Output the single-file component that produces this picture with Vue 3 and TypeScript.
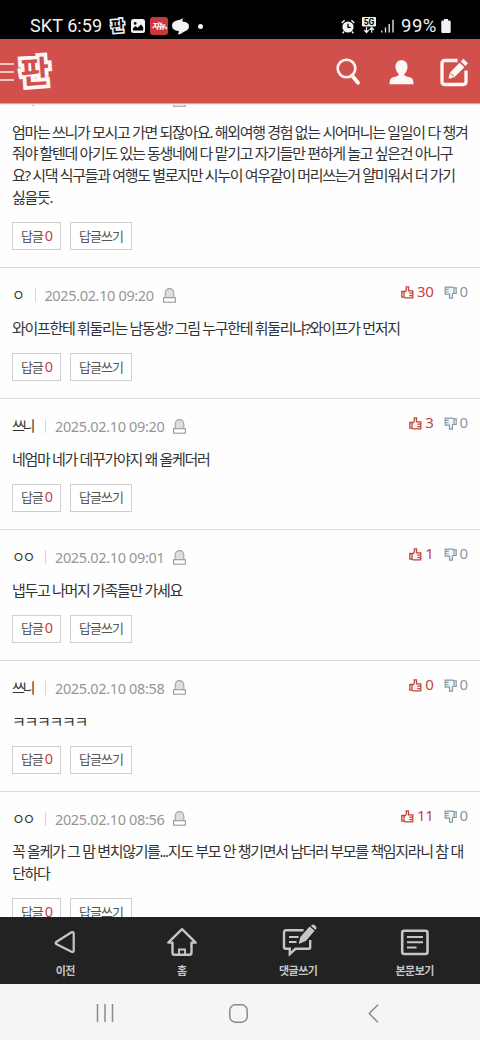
<script setup lang="ts">
interface Comment { name: string; date: string; up: number; lines: string[] }

const comments: Comment[] = [
  {
    name: '쓰니', date: '2025.02.10 09:21', up: 0,
    lines: [
      '엄마는 쓰니가 모시고 가면 되잖아요. 해외여행 경험 없는 시어머니는 일일이 다 챙겨',
      '줘야 할텐데 아기도 있는 동생네에 다 맡기고 자기들만 편하게 놀고 싶은건 아니구',
      '요? 시댁 식구들과 여행도 별로지만 시누이 여우같이 머리쓰는거 얄미워서 더 가기',
      '싫을듯.',
    ],
  },
  { name: 'ㅇ', date: '2025.02.10 09:20', up: 30, lines: ['와이프한테 휘둘리는 남동생? 그림 누구한테 휘둘리냐?와이프가 먼저지'] },
  { name: '쓰니', date: '2025.02.10 09:20', up: 3, lines: ['네엄마 네가 데꾸가야지 왜 올케더러'] },
  { name: 'ㅇㅇ', date: '2025.02.10 09:01', up: 1, lines: ['냅두고 나머지 가족들만 가세요'] },
  { name: '쓰니', date: '2025.02.10 08:58', up: 0, lines: ['ㅋㅋㅋㅋㅋㅋ'] },
  {
    name: 'ㅇㅇ', date: '2025.02.10 08:56', up: 11,
    lines: ['꼭 올케가 그 맘 변치않기를...지도 부모 안 챙기면서 남더러 부모를 책임지라니 참 대', '단하다'],
  },
]
</script>

<template>
  <div class="screen">
    <div class="status">
      <div class="st-left">
        <span class="st-text carrier">SKT 6:59</span>
        <svg class="st-pan" width="17" height="18" viewBox="0 0 36 38">
          <text x="18" y="30" text-anchor="middle" class="pan-glyph dark" transform="rotate(-4 18 18)">판</text>
        </svg>
        <svg class="st-img" width="14" height="14" viewBox="0 0 14 14">
          <rect width="14" height="14" rx="2.5" fill="#f2f2f2" />
          <circle cx="4.2" cy="4.4" r="1.3" fill="#000" />
          <path d="M2 11.5V9.2L4.5 7l2 1.8L10 5.6l2.2 2.6v3.3z" fill="#000" />
        </svg>
        <span class="st-app">지뉴.</span>
        <svg class="st-swirl" width="17" height="17" viewBox="0 0 17 17">
          <path d="M11.500 0Q10 2 10.500 3.400 17 4 17 8.500 17 12 12 13.800 8.500 16.500 6 16.500L7 13.200Q0 12.500 0 7.500 0 3.500 5 2.500 9 1.800 11.500 0z" fill="#f2f2f2" />
        </svg>
        <span class="st-dot"></span>
      </div>
      <div class="st-right">
        <svg width="14" height="15" viewBox="0 0 14 15">
          <circle cx="7" cy="8" r="5.600" fill="#f2f2f2" />
          <path d="M.8 4 3.600 1.300M13.200 4 10.400 1.300M3 12.500 1.600 14.200M11 12.500l1.400 1.700" stroke="#f2f2f2" stroke-width="1.500" fill="none" />
          <path d="M7 4.800v3.500h2.800" stroke="#000" stroke-width="1.300" fill="none" />
        </svg>
        <svg class="st-5g" width="14" height="17" viewBox="0 0 14 17">
          <rect width="14" height="9.500" rx="1" fill="#f2f2f2" />
          <text x="7" y="8" text-anchor="middle" class="g5">5G</text>
          <path d="M4.500 10v5M2.300 13l2.200 2.500L6.700 13M9.700 15.800v-5M7.500 13l2.200-2.500 2.200 2.500" stroke="#f2f2f2" stroke-width="1.200" fill="none" />
        </svg>
        <svg class="st-sig" width="13" height="14" viewBox="0 0 13 14">
          <path d="M.8 11.500V13.500M4.500 8.500v5M8.200 5v8.500M12 .8v12.700" stroke="#f2f2f2" stroke-width="1.300" />
        </svg>
        <span class="st-text pct">99%</span>
        <svg class="st-bat" width="10" height="14" viewBox="0 0 10 14">
          <path d="M3 0h4v1.500h1.500q1.200 0 1.200 1.200v10q0 1.200-1.200 1.200h-7Q.3 13.900.3 12.700v-10Q.3 1.500 1.500 1.500H3z" fill="#f2f2f2" />
        </svg>
      </div>
    </div>

    <header class="header">
      <div class="burger"><i></i><i></i><i></i></div>
      <svg class="logo" width="36" height="36" viewBox="0 0 36 36">
        <text x="18" y="29" text-anchor="middle" class="pan-glyph" transform="rotate(-4 18 18)">판</text>
      </svg>
      <div class="tools">
        <svg width="25" height="28" viewBox="0 0 25 28">
          <circle cx="10.500" cy="10.500" r="8.800" fill="none" stroke="#fff7f5" stroke-width="2.600" />
          <path d="M16 17.500l6 7.300" stroke="#fff7f5" stroke-width="3.800" stroke-linecap="round" />
        </svg>
        <svg width="25" height="25" viewBox="0 0 25 25">
          <path d="M12.500.3c3.700 0 6 2.500 6 6.500 0 3-1.300 5.600-3 7v1.400c1 1 3.500 1.300 6 2.300 2.200.9 3 2.700 3 6.700H.5c0-4 .8-5.800 3-6.700 2.500-1 5-1.300 6-2.300v-1.400c-1.700-1.400-3-4-3-7 0-4 2.300-6.500 6-6.500z" fill="#fff7f5" />
        </svg>
        <svg width="29" height="29" viewBox="0 0 29 29">
          <path d="M17.500 2.500H5Q2 2.500 2 5.500v18q0 3 3 3h18q3 0 3-3V12.500" fill="none" stroke="#fff7f5" stroke-width="3.300" />
          <path d="M23.300.8l4.700 4.500-2.500 2.700-4.800-4.500zM19.600 4.700l4.800 4.500L14.600 18.900l-5 1.900-1-.9 1.400-5.400z" fill="#fff7f5" />
          <path d="M10.300 15l3.600 3.400" stroke="#d2504c" stroke-width="1" />
        </svg>
      </div>
    </header>

    <main class="list">
      <div class="scroll">
        <article v-for="(c, i) in comments" :key="i" class="comment">
          <div class="meta">
            <span class="name">{{ c.name }}</span>
            <span class="date">{{ c.date }}</span>
            <svg class="bell" width="13" height="15" viewBox="0 0 13 15">
              <path d="M2.200 9.500V5a4.300 4.400 0 0 1 8.600 0v4.500z" fill="#dedede" stroke="#a2a2a2" stroke-width="1.100" />
              <rect x=".6" y="9.700" width="11.800" height="4.500" fill="#fff" stroke="#a2a2a2" stroke-width="1.200" />
            </svg>
            <div class="votes">
              <svg class="thumb" width="13" height="13" viewBox="0 0 13 13">
                <path d="M3 5.500H.8v5.700H3M3 5.500h1.300L5.300 4V.8h2.200v4h4.300v7.100H4.200L3 11.200z" fill="#fff6f5" stroke="#c0453f" stroke-width="1.300" />
                <path d="M8.300 7.200h3.500M8.300 9.600h3.500" stroke="#c0453f" stroke-width="1.200" />
              </svg>
              <span class="up">{{ c.up }}</span>
              <svg class="thumb down-icon" width="13" height="13" viewBox="0 0 13 13">
                <path d="M10 7.500h2.200V1.800H10M10 7.500H8.700L8.400 9v3.200H5.500v-4H1.200V1.100h7.600L10 1.800z" fill="#f1f7fb" stroke="#8599a5" stroke-width="1.200" />
                <path d="M1.200 3.400h3.500M1.200 5.800h3.500" stroke="#8599a5" stroke-width="1.100" />
              </svg>
              <span class="down">0</span>
            </div>
          </div>
          <p class="body"><span v-for="l in c.lines" :key="l" class="line">{{ l }}</span></p>
          <div class="actions">
            <button class="btn reply">답글<b>0</b></button>
            <button class="btn write">답글쓰기</button>
          </div>
        </article>
      </div>
    </main>

    <nav class="bottom">
      <a class="tab t1">
        <svg width="32" height="34" viewBox="0 0 32 34">
          <path d="M7.200 16 22.500 6.300q2.200-1 2.200 1.200v17q0 2.200-2.200 1.200L7.200 18q-1.200-1 0-2z" fill="none" stroke="#c6c6c6" stroke-width="2.200" stroke-linejoin="round" />
        </svg>
        <span>이전</span>
      </a>
      <a class="tab t2">
        <svg width="32" height="34" viewBox="0 0 32 34">
          <path d="M2.300 16.600 16 3.200l13.700 13.400h-4.200v10.200q0 2-2 2h-15q-2 0-2-2V16.600z" fill="none" stroke="#c6c6c6" stroke-width="2.400" stroke-linejoin="round" />
          <path d="M13 28.500v-5h6v5" fill="none" stroke="#c6c6c6" stroke-width="1.900" />
        </svg>
        <span>홈</span>
      </a>
      <a class="tab t3">
        <svg width="36" height="34" viewBox="0 0 36 34">
          <path d="M23.500 4.300H6Q4 4.300 4 6.300v14.500q0 2 2 2h3.800v5.300l5.700-5.300h13.200q1.500 0 1.500-1.500V14" fill="none" stroke="#c6c6c6" stroke-width="2.400" />
          <path d="M9 11h9.500M9 16h7.500" stroke="#c6c6c6" stroke-width="2" />
          <path d="M31.500-.6q1.600-1.600 3.400-.2t1.600 3.300l-1 1.200-5-4zM29.600.6l5 4.100-8.700 10.300-7.200 3 1.600-7z" fill="#c6c6c6" />
        </svg>
        <span>댓글쓰기</span>
      </a>
      <a class="tab t4">
        <svg width="32" height="34" viewBox="0 0 32 34">
          <rect x="3.200" y="4.700" width="25.300" height="23.300" rx="2" fill="none" stroke="#c6c6c6" stroke-width="2.600" />
          <path d="M8 11h16M8 16.200h16M8 21.500h9.500" stroke="#c6c6c6" stroke-width="2.100" />
        </svg>
        <span>본문보기</span>
      </a>
    </nav>

    <div class="sysnav">
      <svg width="18" height="18" viewBox="0 0 18 18"><path d="M1.500 0v18M9 0v18M16.500 0v18" stroke="#8a8a8c" stroke-width="1.500" /></svg>
      <svg class="home-key" width="19" height="19" viewBox="0 0 19 19"><rect x=".8" y=".8" width="17.400" height="17.400" rx="5.500" fill="none" stroke="#8a8a8c" stroke-width="1.500" /></svg>
      <svg width="11" height="19" viewBox="0 0 11 19"><path d="M10 .7 1.200 9.500 10 18.300" fill="none" stroke="#8a8a8c" stroke-width="1.500" /></svg>
    </div>
  </div>
</template>

<style>
body { margin: 0; background: #fff; }
</style>

<style scoped>
.screen {
  width: 480px; height: 1040px; display: flex; flex-direction: column; overflow: hidden;
  background: #fefefe; font-family: "Noto Sans", "Noto Sans CJK KR", sans-serif; color: #333;
}
svg { display: block; flex: none; overflow: visible; }

.status {
  height: 39px; flex: none; background: #000; display: flex; justify-content: space-between;
  padding: 13px 29px 0 30px; box-sizing: border-box; color: #f2f2f2;
}
.st-left, .st-right { display: flex; align-items: center; height: 26px; }
.st-text { font: 400 18px/26px Roboto, sans-serif; white-space: nowrap; }
.carrier { width: 73px; letter-spacing: 0.080px; }
.st-pan { margin-left: 6px; }
.st-img { margin-left: 5px; }
.st-app {
  width: 18px; height: 18px; margin-left: 5px; border-radius: 3px; background: #c8383d; color: #fff;
  font: italic 900 8px/18px "Noto Sans CJK KR", sans-serif; letter-spacing: -0.800px; text-align: center;
}
.st-swirl { margin-left: 4px; }
.st-dot { width: 5px; height: 5px; border-radius: 50%; background: #f2f2f2; margin-left: 9px; }
.st-5g { margin-left: 7px; margin-top: -2px; }
.g5 { font: 700 8.500px Roboto, sans-serif; fill: #000; }
.st-sig { margin-left: 5px; }
.pct { margin-left: 7px; width: 37px; font-size: 18.500px; letter-spacing: 0.500px; }
.st-bat { margin-left: 3px; }

.header {
  height: 65px; flex: none; background: #d2504c; display: flex; align-items: center;
  box-sizing: border-box; border-bottom: 1px solid #e4a09d; box-shadow: 0 1px 1px #fbe9e9; z-index: 1;
}
.burger { width: 14px; display: flex; flex-direction: column; gap: 6px; padding-top: 2px; }
.burger i { height: 2px; background: #f3c6c2; }
.logo { margin-left: 3px; margin-top: 2px; }
.pan-glyph {
  font: 700 31px/31px "Noto Sans CJK KR", sans-serif; fill: #d2504c; stroke: #fff7f5; stroke-width: 7.500px;
  paint-order: stroke; stroke-linejoin: miter; stroke-miterlimit: 2;
}
.pan-glyph.dark { fill: #000; stroke: #f2f2f2; stroke-width: 7px; }
.tools { margin-left: auto; display: flex; align-items: center; gap: 28px; padding: 2px 11px 0 0; }
.tools svg:nth-child(3) { margin-left: -2px; }

.list { flex: 1; min-height: 0; overflow: hidden; }
.scroll { margin-top: -33px; }
.comment { border-top: 1px solid #dedede; padding: 16px 12px 17.100px; }
.meta { height: 22px; display: flex; align-items: center; }
.name { font-size: 14px; line-height: 22px; letter-spacing: -2.300px; color: #333; }
.date {
  font-size: 14.500px; line-height: 14px; color: #969696; letter-spacing: -0.350px;
  border-left: 1px solid #d6d6d6; margin-left: 12.300px; padding-left: 8.500px; white-space: nowrap;
}
.bell { margin-left: 9px; }
.votes { margin-left: auto; display: flex; align-items: center; margin-top: -8px; line-height: 20px; font-size: 15px; }
.thumb { margin-top: 3px; }
.up { color: #c0453f; margin-left: 3px; letter-spacing: -0.400px; }
.down { color: #8599a5; margin-left: 2px; }
.down-icon { margin-left: 11px; }
.body { margin: 11.700px 0 13.300px; font-size: 15px; line-height: 21.800px; letter-spacing: -1.320px; color: #333; }
.line { display: block; white-space: nowrap; }
.actions { display: flex; gap: 9px; height: 28px; }
.btn {
  box-sizing: border-box; height: 28px; border: 1px solid #cfcfcf; background: #fff; padding: 0;
  font: 400 13px/25px "Noto Sans", "Noto Sans CJK KR", sans-serif; letter-spacing: -1px; color: #555; white-space: nowrap;
}
.reply { width: 49px; }
.write { width: 62px; }
.btn b { font-weight: 400; font-size: 14.500px; line-height: 20px; color: #c0453f; margin-left: 2px; }

.bottom { height: 67px; flex: none; background: #222; display: flex; color: #c6c6c6; }
.tab { width: 116.500px; display: flex; flex-direction: column; align-items: center; }
.t1 { margin-left: 7px; }
.tab svg { margin-top: 9px; }
.tab span { font-size: 11px; font-weight: 700; line-height: 16px; margin-top: 3px; letter-spacing: -0.500px; white-space: nowrap; }

.sysnav {
  height: 56px; flex: none; box-sizing: border-box; background: #f5f5f7; display: flex; align-items: center;
  padding: 2px 101px 0 96px; justify-content: space-between;
}
.home-key { margin-left: -5px; }
</style>
